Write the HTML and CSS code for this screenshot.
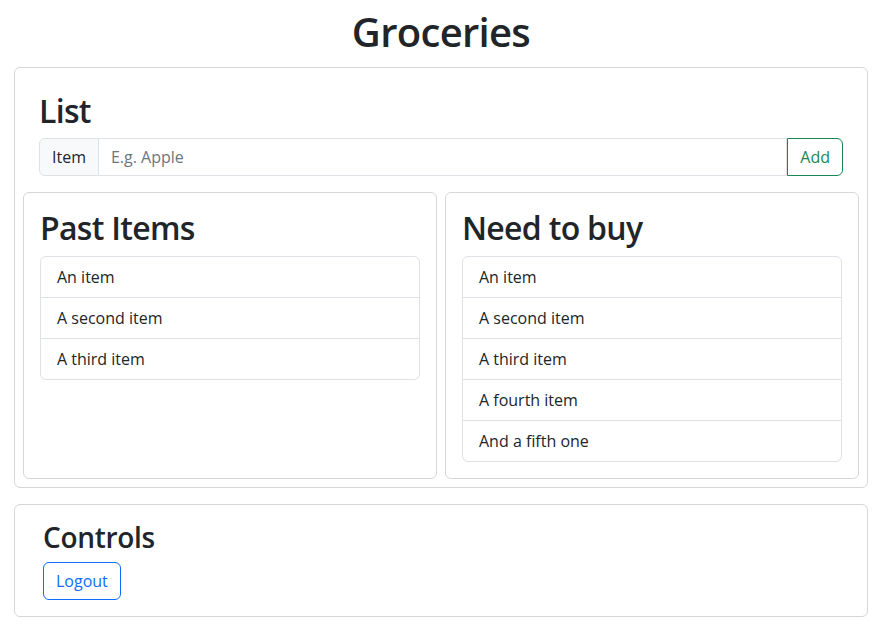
FILE: index.html
```html
<!DOCTYPE html>
<html lang="en">
<head>
<meta charset="utf-8">
<title>Groceries</title>
<link rel="stylesheet" href="styles.css">
</head>
<body>
<h1 class="title">Groceries</h1>
<main class="page">
  <section class="card list-card">
    <div class="list-head">
      <h2 class="h2">List</h2>
      <div class="input-group">
        <span class="ig-label">Item</span>
        <input class="ig-input" type="text" placeholder="E.g. Apple">
        <button class="btn btn-green" type="button">Add</button>
      </div>
    </div>
    <div class="columns">
      <div class="card sub-card">
        <h2 class="h2">Past Items</h2>
        <ul class="list-group">
          <li>An item</li>
          <li>A second item</li>
          <li>A third item</li>
        </ul>
      </div>
      <div class="card sub-card">
        <h2 class="h2">Need to buy</h2>
        <ul class="list-group">
          <li>An item</li>
          <li>A second item</li>
          <li>A third item</li>
          <li>A fourth item</li>
          <li>And a fifth one</li>
        </ul>
      </div>
    </div>
  </section>
  <section class="card controls-card">
    <h3 class="h3">Controls</h3>
    <div><button class="btn btn-blue" type="button">Logout</button></div>
  </section>
</main>
</body>
</html>
```
FILE: styles.css
```css
* { box-sizing: border-box; }
html, body { margin: 0; padding: 0; }
body {
  font-family: "Open Sans", "Noto Sans", sans-serif;
  font-size: 16px;
  line-height: 1.5;
  color: #212529;
  background: #fff;
}
.title {
  margin: 8px 0 11px;
  text-align: center;
  font-size: 40px;
  font-weight: 600;
  letter-spacing: -0.7px;
  line-height: 1.2;
}
.page {
  padding: 0 14px 0 14px;
  display: flex;
  flex-direction: column;
  gap: 16px;
}
.card {
  border: 1px solid #d6d6d6;
  border-radius: 6px;
  background: #fff;
}
.list-card { padding: 8px; }
.list-head { padding: 16px; }
.h2 {
  margin: 0 0 8px;
  font-size: 32px;
  font-weight: 600;
  letter-spacing: -0.7px;
  line-height: 1.2;
}
.h3 {
  margin: 0 0 8px;
  font-size: 28px;
  font-weight: 600;
  letter-spacing: -0.3px;
  line-height: 1.2;
}
.input-group {
  display: flex;
  height: 38px;
}
.ig-label {
  display: flex;
  align-items: center;
  padding: 0 12px;
  background: #f8f9fa;
  border: 1px solid #dee2e6;
  border-radius: 6px 0 0 6px;
}
.ig-input {
  flex: 1;
  min-width: 0;
  font: inherit;
  color: #212529;
  border: 1px solid #dee2e6;
  border-left: 0;
  padding: 6px 12px;
  outline: none;
}
.ig-input::placeholder { color: #6c757d; }
.btn {
  font: inherit;
  background: #fff;
  padding: 6px 12px;
  height: 38px;
  border-radius: 6px;
  cursor: pointer;
}
.btn-green {
  color: #198754;
  border: 1px solid #198754;
  border-radius: 0 6px 6px 0;
}
.btn-blue {
  color: #0d6efd;
  border: 1px solid #0d6efd;
}
.columns {
  display: grid;
  grid-template-columns: 1fr 1fr;
  gap: 8px;
}
.sub-card { padding: 16px; }
.list-group {
  list-style: none;
  margin: 0;
  padding: 0;
  border: 1px solid #dee2e6;
  border-radius: 6px;
}
.list-group li {
  padding: 8px 16px;
  border-top: 1px solid #dee2e6;
}
.list-group li:first-child { border-top: 0; }
.controls-card { padding: 16px 28px; }
```
